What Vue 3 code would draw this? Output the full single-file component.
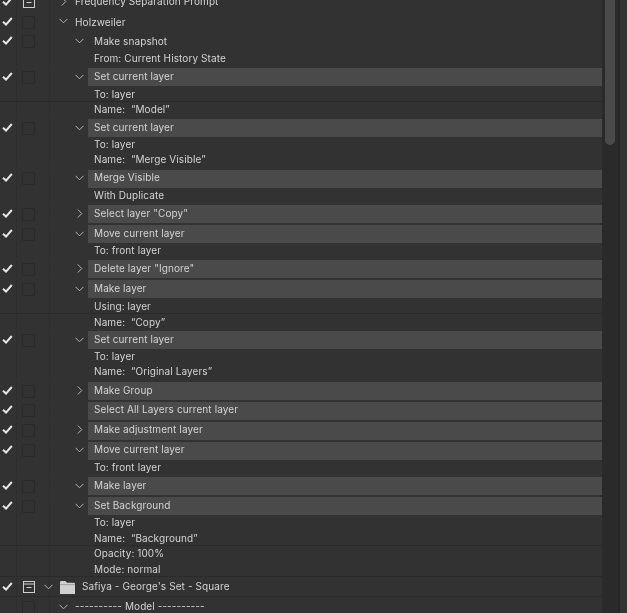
<script setup>
const E = 'expanded'
const C = 'collapsed'
const rows = [
  { text: 'Frequency Separation Prompt', kind: 'action', h: 20, check: true, box: 'minus', tw: C },
  { text: 'Holzweiler', kind: 'action', h: 21, check: true, box: 'empty', tw: E, upm: true },
  { text: 'Make snapshot', kind: 'plain', h: 18, check: true, box: 'empty', tw: E, upm: true },
  { text: 'From: Current History State', kind: 'param', h: 15 },
  { text: 'Set current layer', kind: 'cmd', h: 18, gap: 2, check: true, box: 'empty', tw: E },
  { text: 'To: layer', kind: 'param', h: 16, line: true },
  { text: 'Name:  “Model”', kind: 'param', h: 15 },
  { text: 'Set current layer', kind: 'cmd', h: 18, gap: 2, check: true, box: 'empty', tw: E },
  { text: 'To: layer', kind: 'param', h: 15 },
  { text: 'Name:  “Merge Visible”', kind: 'param', h: 15 },
  { text: 'Merge Visible', kind: 'cmd', h: 18, gap: 3, check: true, box: 'empty', tw: E, up: true, upm: true },
  { text: 'With Duplicate', kind: 'param', h: 15 },
  { text: 'Select layer "Copy"', kind: 'cmd', h: 18, gap: 2, check: true, box: 'empty', tw: C },
  { text: 'Move current layer', kind: 'cmd', h: 18, gap: 2, check: true, box: 'empty', tw: E },
  { text: 'To: front layer', kind: 'param', h: 15 },
  { text: 'Delete layer "Ignore"', kind: 'cmd', h: 18, gap: 2, check: true, box: 'empty', tw: C },
  { text: 'Make layer', kind: 'cmd', h: 18, gap: 2, check: true, box: 'empty', tw: E },
  { text: 'Using: layer', kind: 'param', h: 16, line: true },
  { text: 'Name:  “Copy”', kind: 'param', h: 16 },
  { text: 'Set current layer', kind: 'cmd', h: 18, gap: 1, check: true, box: 'empty', tw: E },
  { text: 'To: layer', kind: 'param', h: 15 },
  { text: 'Name:  “Original Layers”', kind: 'param', h: 15 },
  { text: 'Make Group', kind: 'cmd', h: 18, gap: 3, check: true, box: 'empty', tw: C },
  { text: 'Select All Layers current layer', kind: 'cmd', h: 18, gap: 2, check: true, box: 'empty', up: true, upm: true },
  { text: 'Make adjustment layer', kind: 'cmd', h: 18, gap: 2, check: true, box: 'empty', tw: C, up: true, upm: true },
  { text: 'Move current layer', kind: 'cmd', h: 18, gap: 2, check: true, box: 'empty', tw: E, up: true, upm: true },
  { text: 'To: front layer', kind: 'param', h: 15 },
  { text: 'Make layer', kind: 'cmd', h: 18, gap: 2, check: true, box: 'empty', tw: E },
  { text: 'Set Background', kind: 'cmd', h: 18, gap: 2, check: true, box: 'empty', tw: E },
  { text: 'To: layer', kind: 'param', h: 15 },
  { text: 'Name:  “Background”', kind: 'param', h: 16, line: true },
  { text: 'Opacity: 100%', kind: 'param', h: 15 },
  { text: 'Mode: normal', kind: 'param', h: 16, line: true },
  { text: 'Safiya - George\'s Set - Square', kind: 'set', h: 20, check: true, box: 'minus', tw: E, line: true },
  { text: '---------- Model ----------', kind: 'action', h: 20, box: 'empty', tw: E },
]
</script>

<template>
  <div class="panel">
    <div class="list">
      <div
        v-for="(row, i) in rows"
        :key="i"
        class="row"
        :class="[row.kind, { line: row.line, up: row.up, upm: row.upm }]"
        :style="{ height: row.h + 'px', marginTop: (row.gap || 0) + 'px' }"
      >
        <div class="check">
          <svg v-if="row.check" width="11" height="9" viewBox="0 0 11 9">
            <path d="M1 4.8 L4 7.6 L9.8 1" fill="none" stroke="#e6e6e6" stroke-width="2" />
          </svg>
        </div>
        <div class="box">
          <span v-if="row.box === 'empty'" class="empty"></span>
          <svg v-else-if="row.box === 'minus'" class="minus" width="12" height="12" viewBox="0 0 12 12">
            <rect x="0.5" y="0.5" width="11" height="11" fill="none" stroke="#cfcfcf" />
            <path d="M0.5 3H11.5M3.5 6.5H8.5" stroke="#cfcfcf" fill="none" />
          </svg>
        </div>
        <div class="twist">
          <svg v-if="row.tw === 'expanded'" width="9" height="6" viewBox="0 0 9 6">
            <path d="M0.5 0.8 L4.5 4.8 L8.5 0.8" fill="none" stroke="#b4b4b4" />
          </svg>
          <svg v-else-if="row.tw === 'collapsed'" width="6" height="9" viewBox="0 0 6 9">
            <path d="M0.8 0.5 L4.8 4.5 L0.8 8.5" fill="none" stroke="#b4b4b4" />
          </svg>
        </div>
        <svg v-if="row.kind === 'set'" class="folder" width="15" height="13" viewBox="0 0 15 13">
          <path d="M0 1.2 Q0 0 1.2 0 H5.4 L7 1.8 H13.8 Q15 1.8 15 3 V13 H0 Z" fill="#d0d0d0" />
          <path d="M0 3.6 H15" stroke="#8a8a8a" stroke-width="0.7" />
        </svg>
        <div class="label"><span class="text">{{ row.text }}</span></div>
      </div>
    </div>
    <div class="track"><div class="thumb"></div></div>
    <div class="edge"></div>
  </div>
</template>

<style>
html, body { margin: 0; background: #323232; }
</style>

<style scoped>
.panel {
  display: flex;
  width: 627px;
  height: 613px;
  overflow: hidden;
  background: #323232;
  font-family: Inter, "Liberation Sans", sans-serif;
  font-size: 10px;
  color: #d4d4d4;
}
.list {
  width: 602px;
  flex: none;
  margin-top: -8px;
}
.row {
  display: flex;
  align-items: stretch;
  box-sizing: border-box;
}
.row.line {
  box-shadow: inset 0 -1px 0 #2a2a2a;
}
.check {
  width: 17px;
  flex: none;
  display: flex;
  align-items: center;
  padding-left: 2px;
  padding-bottom: 1px;
  box-sizing: border-box;
  border-right: 1px solid #2e2e2e;
}
.upm .check { padding-bottom: 3px; }
.box {
  width: 33px;
  flex: none;
  display: flex;
  align-items: center;
  padding-left: 5px;
  box-sizing: border-box;
  border-right: 1px solid #2e2e2e;
}
.upm .box { padding-bottom: 1px; }
.minus { margin-left: 1px; }
.empty {
  width: 11px;
  height: 11px;
  border: 1px solid #2a2a2a;
  border-radius: 1px;
}
.twist {
  display: flex;
  align-items: center;
  justify-content: center;
  flex: none;
  padding-bottom: 1px;
  box-sizing: border-box;
}
.upm .twist { padding-bottom: 3px; }
.cmd .twist, .plain .twist, .param .twist { width: 38px; padding-left: 21px; }
.action .twist { width: 25px; padding-left: 2px; }
.set .twist { width: 10px; margin-left: -7px; margin-right: 7px; }
.folder { align-self: center; flex: none; margin-right: 7px; }
.label {
  flex: 1;
  display: flex;
  align-items: center;
  box-sizing: border-box;
  white-space: pre;
  letter-spacing: 0.1px;
  padding-bottom: 1px;
}
.text { filter: blur(0.25px); }
.cmd .label, .plain .label, .action .label, .set .label { padding-bottom: 2px; }
.up .label { padding-bottom: 4px; }
.cmd .label, .plain .label, .param .label { padding-left: 6px; }
.cmd .label { background: #4a4a4a; }
.track {
  width: 16px;
  flex: none;
  background: #2a2a2a;
  padding-left: 3px;
  box-sizing: border-box;
}
.thumb {
  width: 10px;
  height: 145px;
  background: #4a4a4a;
  border-radius: 0 0 5px 5px;
}
.edge {
  flex: 1;
  border-left: 2px solid #262626;
  background: #333;
}
</style>
